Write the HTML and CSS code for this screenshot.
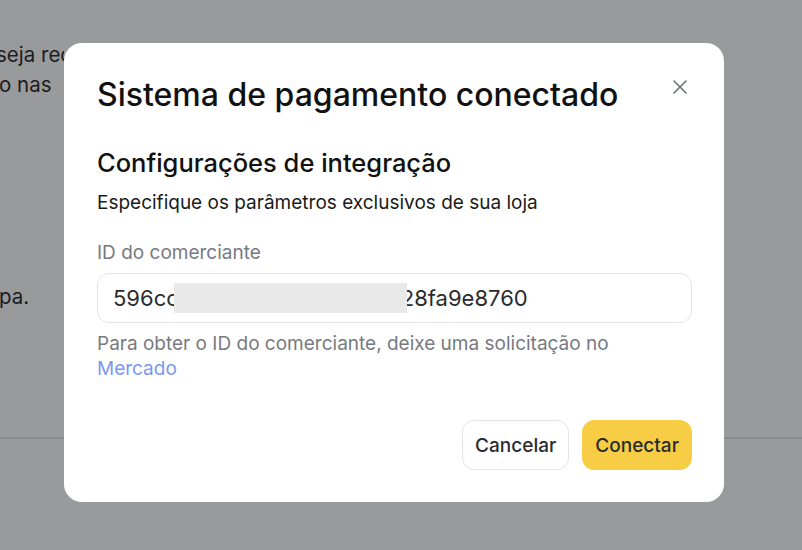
FILE: index.html
```html
<!DOCTYPE html>
<html lang="pt">
<head>
  <meta charset="UTF-8">
  <meta name="viewport" content="width=device-width, initial-scale=1.0">
  <title>Sistema de pagamento conectado</title>
  <link rel="stylesheet" href="styles.css">
</head>
<body>
  <div class="page">
    <p class="page-line page-line-first">seja rec</p>
    <p class="page-line">o nas</p>
    <p class="page-line page-line-low">pa.</p>
    <div class="page-footer"></div>
  </div>

  <div class="overlay">
    <div class="modal">
      <div class="modal-head">
        <h1 class="modal-title">Sistema de pagamento conectado</h1>
        <button class="close" type="button" aria-label="Fechar">
          <svg width="16" height="16" viewBox="0 0 16 16" fill="none" stroke="#6d7077" stroke-width="1.6" stroke-linecap="round">
            <path d="M2 2 L14 14 M14 2 L2 14"/>
          </svg>
        </button>
      </div>

      <h2 class="section-title">Configurações de integração</h2>
      <p class="section-text">Especifique os parâmetros exclusivos de sua loja</p>

      <label class="field-label" for="merchant">ID do comerciante</label>
      <div class="field">
        <span class="field-value">596cc</span><span class="masked"></span><span class="field-value">28fa9e8760</span>
      </div>
      <p class="hint">Para obter o ID do comerciante, deixe uma solicitação no <a href="#" class="link">Mercado</a></p>

      <div class="actions">
        <button class="btn btn-ghost" type="button">Cancelar</button>
        <button class="btn btn-primary" type="button">Conectar</button>
      </div>
    </div>
  </div>
</body>
</html>
```

FILE: styles.css
```css
body {
  margin: 0;
  width: 802px;
  height: 550px;
  overflow: hidden;
  font-family: Inter, "Noto Sans", sans-serif;
  background-color: #999a9c;
  color: #1c1c1e;
}
.page {
  padding-top: 40px;
  height: 100%;
  box-sizing: border-box;
}
.page-line {
  margin: 0 0 0 -1px;
  width: 65px;
  overflow: hidden;
  font-size: 20.5px;
  line-height: 30px;
  white-space: nowrap;
}
.page-line-first {
  margin-left: -4px;
  width: 68px;
}
.page-line-low {
  margin-top: 182px;
}
.page-footer {
  margin-top: 125px;
  height: 2px;
  background-color: #8a8b8f;
}
.overlay {
  position: absolute;
  top: 0;
  left: 0;
  width: 802px;
  height: 550px;
}
.modal {
  position: absolute;
  top: 43px;
  left: 64px;
  width: 660px;
  height: 459px;
  box-sizing: border-box;
  padding: 30px 32px 32px 33px;
  background-color: #fff;
  border-radius: 18px;
  display: flex;
  flex-direction: column;
}
.modal-head {
  display: flex;
  justify-content: space-between;
  align-items: flex-start;
}
.modal-title {
  margin: 0;
  font-size: 32px;
  font-weight: 500;
  line-height: 44px;
  color: #111;
}
.close {
  border: none;
  background: none;
  padding: 0;
  margin: 6px 4px 0 0;
  width: 16px;
  height: 16px;
  cursor: pointer;
}
.section-title {
  margin: 30px 0 0;
  font-size: 25.5px;
  font-weight: 500;
  line-height: 32px;
  color: #111;
}
.section-text {
  margin: 12px 0 0;
  font-size: 19px;
  line-height: 24px;
  color: #1a1a1a;
}
.field-label {
  margin-top: 26px;
  font-size: 19px;
  line-height: 24px;
  color: #777a80;
}
.field {
  margin-top: 8px;
  height: 50px;
  box-sizing: border-box;
  border: 1px solid #e3e4ea;
  border-radius: 12px;
  padding: 0 15px;
  display: flex;
  align-items: center;
  font-size: 22px;
  color: #2b2b2e;
}
.masked {
  display: inline-block;
  width: 233px;
  height: 30px;
  margin: 0 -6px 0 -5px;
  background-color: #e9e9e9;
  position: relative;
}
.hint {
  margin: 8px 0 0;
  font-size: 19px;
  line-height: 25px;
  color: #777a80;
}
.link {
  color: #7a98f2;
  text-decoration: none;
}
.actions {
  margin-top: auto;
  display: flex;
  justify-content: flex-end;
  gap: 13px;
}
.btn {
  height: 50px;
  padding: 0 12px;
  border-radius: 12px;
  font-family: inherit;
  font-size: 19px;
  font-weight: 500;
  color: #2a2b2e;
  cursor: pointer;
}
.btn-ghost {
  background-color: #fff;
  border: 1px solid #e3e4ea;
}
.btn-primary {
  background-color: #f7cd45;
  border: 1px solid #f7cd45;
}
```
